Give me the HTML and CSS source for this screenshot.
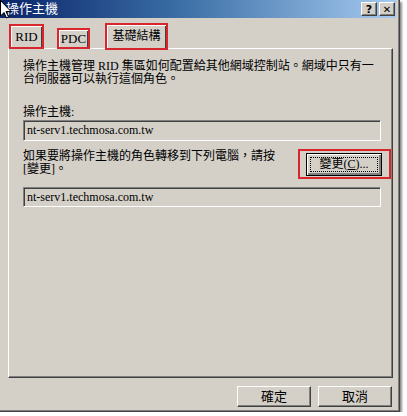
FILE: index.html
```html
<!DOCTYPE html>
<html lang="zh-Hant">
<head>
    <meta charset="UTF-8">
    <title>操作主機</title>
    <link rel="stylesheet" href="styles.css">
</head>
<body>
    <div class="window">
        <div class="titlebar">
            <div class="title">操作主機</div>
            <div class="title-buttons">
                <div class="tbtn">?</div>
                <div class="tbtn close">&#x2715;</div>
            </div>
        </div>

        <div class="tabs">
            <div class="tab mark active rid">RID</div>
            <div class="tab mark pdc">PDC</div>
            <div class="tab mark infra">基礎結構</div>
        </div>

        <div class="panel">
            <p class="desc">操作主機管理 RID 集區如何配置給其他網域控制站。網域中只有一<br>台伺服器可以執行這個角色。</p>
            <div class="label">操作主機:</div>
            <div class="field">nt-serv1.techmosa.com.tw</div>

            <div class="change-row">
                <div class="change-text">如果要將操作主機的角色轉移到下列電腦，請按<br>[變更]。</div>
                <div class="mark change-mark">
                    <div class="button change"><span class="focus">變更(<u>C</u>)...</span></div>
                </div>
            </div>
            <div class="field field2">nt-serv1.techmosa.com.tw</div>
        </div>

        <div class="footer">
            <div class="button">確定</div>
            <div class="button">取消</div>
        </div>
    </div>

    <svg class="cursor" width="12" height="19" viewBox="0 0 12 19">
        <path d="M0.5 0.5 L0.5 16 L4 12.5 L6.5 18 L8.5 17 L6 11.5 L11 11.5 Z" fill="#fff" stroke="#000" stroke-width="1"/>
    </svg>
</body>
</html>
```

FILE: styles.css
```css
body {
    margin: 0;
    background-color: #fff;
    font-family: "Liberation Serif", "Noto Sans CJK TC", serif;
    font-size: 12px;
    color: #000;
}

.window {
    position: relative;
    width: 400px;
    height: 412px;
    box-sizing: border-box;
    padding: 0 3px 3px 0;
    background-color: #d4d0c8;
    border-right: 1px solid #404040;
    border-bottom: 1px solid #404040;
    box-shadow: inset -1px -1px #808080, 2px 2px 2px rgba(0, 0, 0, 0.45);
}

.titlebar {
    height: 18px;
    display: flex;
    justify-content: space-between;
    align-items: center;
    background: linear-gradient(to right, #0a246a, #3a6ea5 45%, #a6caf0);
    color: #fff;
}
.title {
    padding-left: 6px;
    font-size: 13px;
    line-height: 18px;
}
.title-buttons {
    display: flex;
    gap: 2px;
    padding-right: 1px;
}
.tbtn {
    width: 16px;
    height: 14px;
    box-sizing: border-box;
    background-color: #d4d0c8;
    color: #000;
    font-family: "DejaVu Sans", sans-serif;
    font-weight: bold;
    font-size: 11px;
    line-height: 13px;
    text-align: center;
    border-top: 1px solid #fff;
    border-left: 1px solid #fff;
    border-right: 1px solid #404040;
    border-bottom: 1px solid #404040;
    box-shadow: inset -1px -1px #808080;
}
.tbtn.close { font-size: 10px; }

.tabs {
    display: flex;
    align-items: flex-end;
    height: 30px;
    padding-left: 9px;
    position: relative;
    z-index: 1;
}
.mark {
    border: 2px solid #d8262c;
    box-sizing: border-box;
}
.tab {
    text-align: center;
    box-shadow: inset 1px 1px #fff, inset -1px 0 #404040;
    font-size: 13px;
}
.rid {
    width: 35px;
    height: 25px;
    line-height: 21px;
    margin-bottom: -1px;
}
.pdc {
    width: 33px;
    height: 21px;
    line-height: 17px;
    margin-left: 13px;
    margin-bottom: -1px;
}
.infra {
    width: 63px;
    height: 27px;
    line-height: 23px;
    margin-left: 15px;
    margin-bottom: -2px;
    font-size: 12px;
}

.panel {
    margin-left: 8px;
    width: 385px;
    height: 330px;
    box-sizing: border-box;
    padding: 11px 11px 0 14px;
    border-top: 1px solid #fff;
    border-left: 1px solid #fff;
    border-right: 1px solid #404040;
    border-bottom: 1px solid #404040;
    box-shadow: inset -1px -1px #808080;
}

.desc {
    margin: 0;
    line-height: 13px;
}
.label {
    margin-top: 19px;
    line-height: 14px;
}
.field {
    margin-top: 1px;
    height: 21px;
    box-sizing: border-box;
    padding-left: 3px;
    line-height: 18px;
    font-size: 12px;
    border-top: 1px solid #808080;
    border-left: 1px solid #808080;
    border-right: 1px solid #fff;
    border-bottom: 1px solid #fff;
    box-shadow: inset 1px 1px #404040;
}
.field2 {
    margin-top: 8px;
    height: 20px;
}

.change-row {
    display: flex;
    justify-content: space-between;
    align-items: flex-start;
    margin-top: 8px;
    margin-right: -10px;
}
.change-text {
    padding-top: 1px;
    line-height: 13px;
}
.change-mark {
    width: 93px;
    height: 30px;
    padding: 2px 7px 0 6px;
}

.button {
    width: 74px;
    height: 21px;
    box-sizing: border-box;
    text-align: center;
    line-height: 19px;
    font-size: 13px;
    background-color: #d4d0c8;
    border-top: 1px solid #fff;
    border-left: 1px solid #fff;
    border-right: 1px solid #404040;
    border-bottom: 1px solid #404040;
    box-shadow: inset -1px -1px #808080;
}
.button.change {
    width: 76px;
    height: 23px;
    border: 1px solid #000;
    box-shadow: inset 1px 1px #fff, inset -2px -2px #808080;
    padding: 3px;
    line-height: 15px;
    font-size: 12px;
}
.focus {
    display: block;
    border: 1px dotted #000;
    line-height: 13px;
}

.footer {
    display: flex;
    justify-content: flex-end;
    gap: 7px;
    margin-top: 8px;
    padding-right: 4px;
}

.cursor {
    position: absolute;
    left: 0;
    top: 0;
}
```
